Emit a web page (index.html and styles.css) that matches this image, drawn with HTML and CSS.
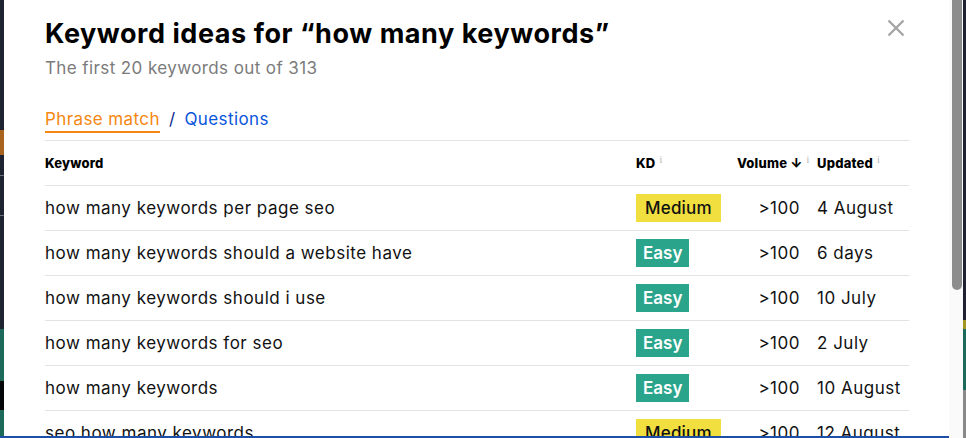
FILE: index.html
```html
<!DOCTYPE html>
<html>
<head>
<meta charset="utf-8">
<link rel="stylesheet" href="styles.css">
</head>
<body>
<div class="page">
  <div class="side side-left">
    <div class="seg s-dark1"></div>
    <div class="seg s-orange"></div>
    <div class="seg s-dark2"></div>
    <div class="seg s-line"></div>
    <div class="seg s-dark3"></div>
    <div class="seg s-line"></div>
    <div class="seg s-dark4"></div>
    <div class="seg s-green1"></div>
    <div class="seg s-black"></div>
    <div class="seg s-green2"></div>
  </div>
  <div class="modal">
    <div class="head">
      <h1 class="title">Keyword ideas for “how many keywords”</h1>
      <button class="close" aria-label="Close">
        <svg width="18" height="18" viewBox="0 0 18 18"><path d="M1.5 1.5 L16.5 16.5 M16.5 1.5 L1.5 16.5" stroke="#a6a6a6" stroke-width="2.4" fill="none"/></svg>
      </button>
    </div>
    <p class="subtitle">The first 20 keywords out of 313</p>
    <div class="tabs">
      <span class="tab active">Phrase match</span>
      <span class="sep">/</span>
      <span class="tab link">Questions</span>
    </div>
    <div class="table">
      <div class="row hrow">
        <div class="c kw">Keyword</div>
        <div class="c kd">KD<sup class="info">i</sup></div>
        <div class="c vol">Volume <span class="arrow">↓</span><sup class="info">i</sup></div>
        <div class="c upd">Updated<sup class="info">i</sup></div>
      </div>
      <div class="row">
        <div class="c kw">how many keywords per page seo</div>
        <div class="c kd"><span class="badge medium">Medium</span></div>
        <div class="c vol">&gt;100</div>
        <div class="c upd">4 August</div>
      </div>
      <div class="row">
        <div class="c kw">how many keywords should a website have</div>
        <div class="c kd"><span class="badge easy">Easy</span></div>
        <div class="c vol">&gt;100</div>
        <div class="c upd">6 days</div>
      </div>
      <div class="row">
        <div class="c kw">how many keywords should i use</div>
        <div class="c kd"><span class="badge easy">Easy</span></div>
        <div class="c vol">&gt;100</div>
        <div class="c upd">10 July</div>
      </div>
      <div class="row">
        <div class="c kw">how many keywords for seo</div>
        <div class="c kd"><span class="badge easy">Easy</span></div>
        <div class="c vol">&gt;100</div>
        <div class="c upd">2 July</div>
      </div>
      <div class="row">
        <div class="c kw">how many keywords</div>
        <div class="c kd"><span class="badge easy">Easy</span></div>
        <div class="c vol">&gt;100</div>
        <div class="c upd">10 August</div>
      </div>
      <div class="row">
        <div class="c kw">seo how many keywords</div>
        <div class="c kd"><span class="badge medium">Medium</span></div>
        <div class="c vol">&gt;100</div>
        <div class="c upd">12 August</div>
      </div>
    </div>
  </div>
  <div class="scrollbar"><div class="thumb"></div></div>
  <div class="side side-right">
    <div class="seg r-dark"></div>
    <div class="seg r-olive"></div>
    <div class="seg r-green"></div>
    <div class="seg r-gray"></div>
  </div>
  <div class="bottom-line"></div>
</div>
</body>
</html>
```

FILE: styles.css
```css
* { box-sizing: border-box; }
html, body { margin: 0; padding: 0; }
body {
  width: 966px;
  height: 438px;
  overflow: hidden;
  background: #1f2231;
  font-family: Inter, "Noto Sans", sans-serif;
  color: #111;
}
.page {
  position: relative;
  display: flex;
  height: 438px;
}
.side { display: flex; flex-direction: column; flex: none; }
.side-left { width: 4px; }
.seg { flex: none; }
.s-dark1 { height: 130px; background: #1f2231; }
.s-orange { height: 25px; background: #a8641e; }
.s-dark2 { height: 20px; background: #1f2231; }
.s-line { height: 1px; background: #6d7080; }
.s-dark3 { height: 39px; background: #1f2231; }
.s-dark4 { height: 113px; background: #1f2231; }
.s-green1 { height: 52px; background: #1d6a5b; }
.s-black { height: 29px; background: #050607; }
.s-green2 { height: 28px; background: #1d6a5b; }

.modal {
  flex: none;
  width: 945px;
  height: 438px;
  background: #fff;
  padding: 0 40px 0 41px;
  overflow: hidden;
}
.head {
  display: flex;
  justify-content: space-between;
  align-items: flex-start;
  padding-top: 18px;
}
.title {
  margin: 0;
  font-size: 27px;
  line-height: 32px;
  font-weight: 700;
  color: #000;
  letter-spacing: 0.55px;
}
.close {
  border: 0;
  background: none;
  padding: 0;
  margin: 1px 4px 0 0;
  width: 18px;
  height: 18px;
  display: block;
}
.close svg { display: block; }
.subtitle {
  margin: 6px 0 0;
  font-size: 17px;
  line-height: 24px;
  color: #7b7b7b;
  letter-spacing: 0.4px;
}
.tabs {
  display: flex;
  align-items: flex-start;
  gap: 9px;
  margin-top: 27px;
  font-size: 17px;
  line-height: 24px;
  height: 33px;
  letter-spacing: 0.4px;
}
.tab.active {
  color: #f68712;
  border-bottom: 2px solid #f68712;
}
.sep { color: #0c2a8f; }
.tab.link { color: #0a55dd; }

.table {
  border-top: 1px solid #e3e3e3;
}
.row {
  display: grid;
  grid-template-columns: 591px 101px 68px 104px;
  align-items: center;
  height: 45px;
  border-bottom: 1px solid #e3e3e3;
  font-size: 17px;
  letter-spacing: 0.5px;
}
.c { white-space: nowrap; }
.hrow {
  height: 45px;
  font-size: 13px;
  font-weight: 800;
  letter-spacing: 0.2px;
}
.hrow .c { color: #000; }
.c.vol { text-align: right; padding-right: 5px; }
.c.upd { padding-left: 12px; }
.hrow .c.vol { text-align: left; padding-right: 0; overflow: visible; }
.info {
  font-family: "Liberation Serif", serif;
  font-weight: 400;
  font-size: 10px;
  color: #b3b3b3;
  margin-left: 4px;
  vertical-align: 5px;
  line-height: 0;
}
.arrow { font-weight: 800; }
.badge {
  display: inline-block;
  height: 28px;
  line-height: 28px;
  padding: 0 9px;
  font-size: 17px;
  font-weight: 500;
  letter-spacing: 0.2px;
}
.badge.medium { background: #f0df3f; color: #111; }
.badge.easy { background: #2aa58b; color: #fff; font-weight: 600; padding: 0 7px; letter-spacing: 0; }

.scrollbar {
  flex: none;
  width: 14px;
  height: 438px;
  background: #fafafa;
  padding: 0 1px 0 3px;
}
.thumb {
  width: 10px;
  height: 290px;
  background: #8c8c8c;
  border-radius: 0 0 5px 5px;
}
.side-right { width: 3px; }
.r-dark { height: 320px; background: #1f2231; }
.r-olive { height: 9px; background: #a49624; }
.r-green { height: 61px; background: #1d6a5b; }
.r-gray { height: 48px; background: #8a8a8a; }
.bottom-line {
  position: absolute;
  left: 0;
  bottom: 0;
  width: 949px;
  height: 2px;
  background: #1e4fa8;
}
```
